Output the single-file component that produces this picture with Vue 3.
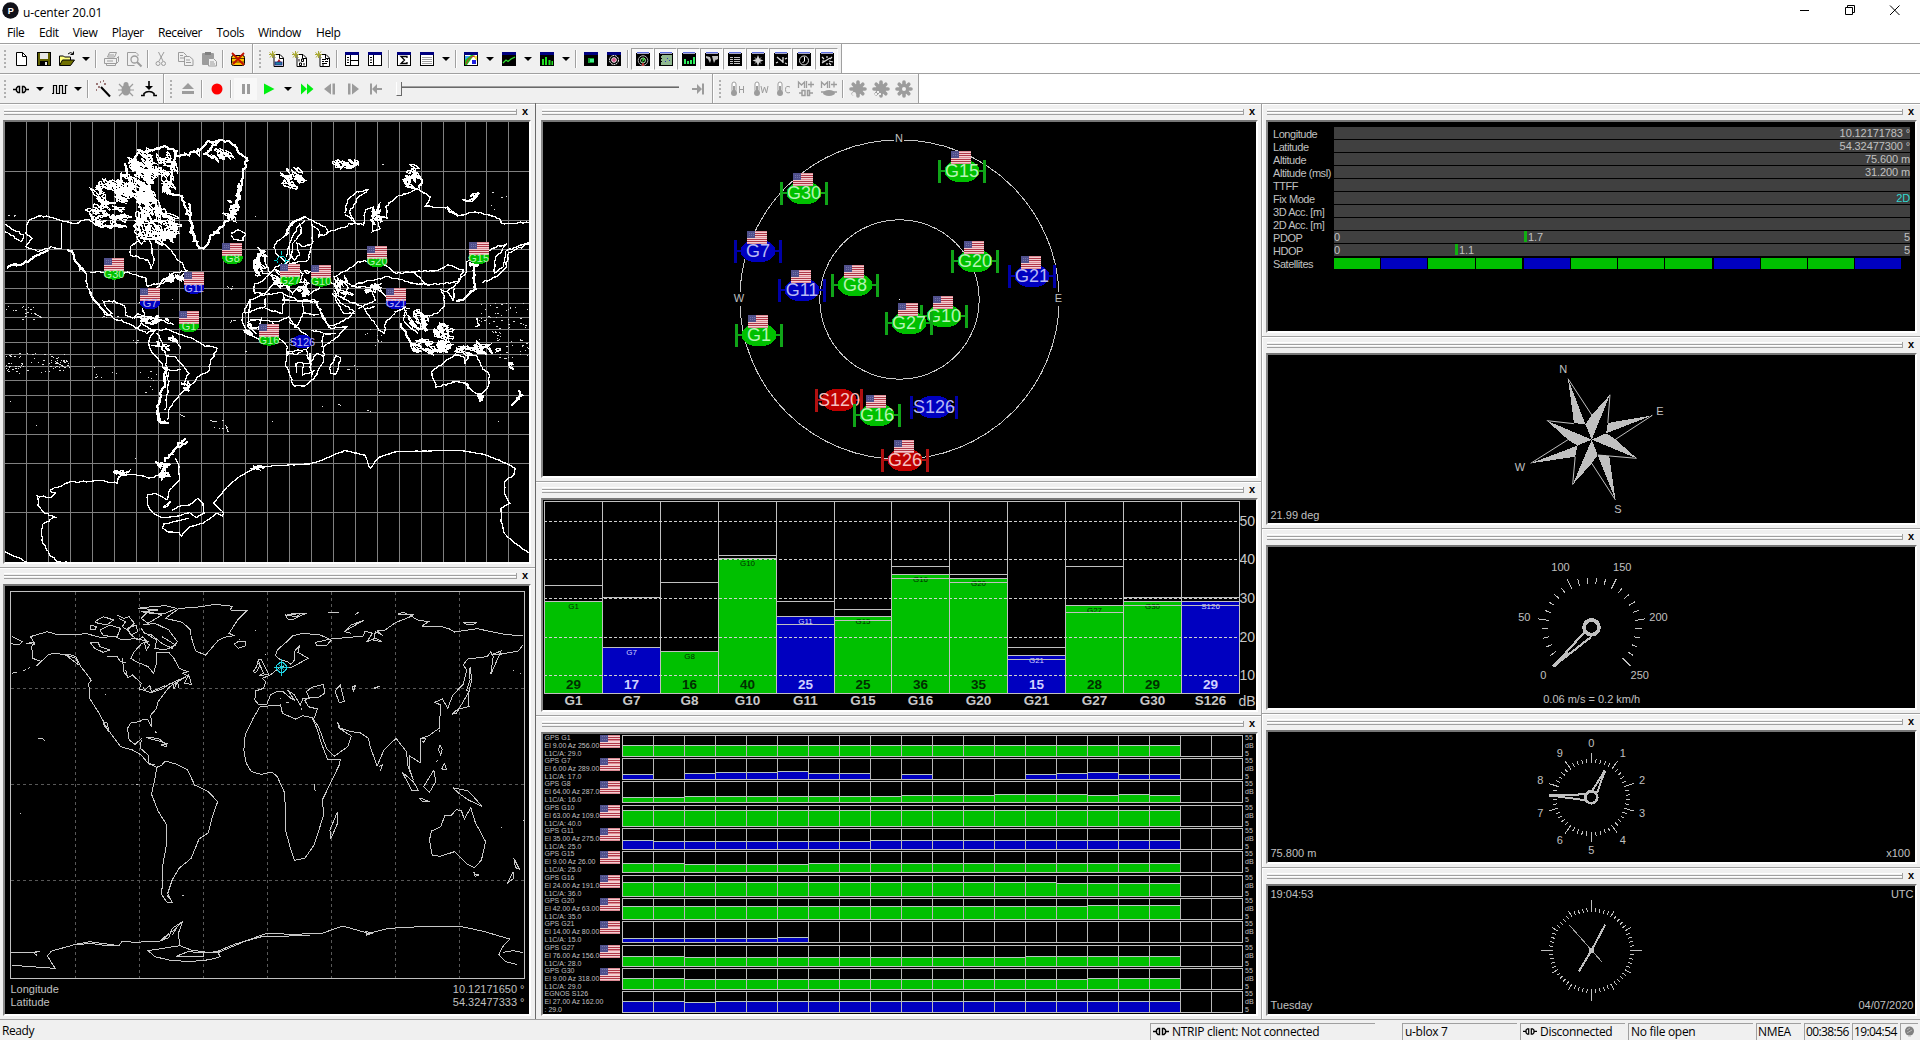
<script setup>
const menu = [
  ['File', 32], ['Edit', 33.7], ['View', 39], ['Player', 46.3], ['Receiver', 58.4],
  ['Tools', 41.6], ['Window', 58], ['Help', 30]
]

/* ---------- toolbar icons, 16 x 16 each ---------- */
const G = '#9c9c9c'
const page = '<path d="M5 3.5h6l3.500 3.500v8.500h-9.500z" fill="#fff" stroke="#000"/><path d="M10.500 3.500v4h4" fill="none" stroke="#000"/><path d="M0.500 1.500l6 5M6 0.500l-5 6M3.500 0v7M0 3.500h7" stroke="#a8a830" stroke-width="1"/>'
const win = (inner, bg = '#fff') => `<rect x="1.5" y="2.500" width="13" height="12" fill="${bg}" stroke="#000"/><rect x="1" y="1" width="14" height="3" fill="#000080"/>${inner}`
const dwin = (inner) => `<rect x="1" y="2" width="14" height="13" fill="#000"/><rect x="2" y="1" width="12" height="1" fill="#5b6ee0"/><rect x="2" y="2" width="12" height="1" fill="#a8a8c8"/>${inner}`
const thermo = (c) => `<rect x="3" y="1" width="4" height="10" rx="2" fill="#fff" stroke="${G}"/><circle cx="5" cy="12" r="3" fill="${G}"/><rect x="4" y="5" width="2" height="7" fill="${G}"/>${c}`
const gear = `<circle cx="8" cy="8" r="5" fill="${G}"/><path d="M8 1v14M1 8h14M3.200 3.200l9.600 9.600M12.800 3.200l-9.600 9.600" stroke="${G}" stroke-width="3.600" stroke-linecap="round"/>`
const mplus = `<path d="M0.500 7v-6l3 3 3-3v6M8.500 0v7M10 3.500h6M13 0.500v6" fill="none" stroke="${G}" stroke-width="1.300"/>`
const icons = {
  neu: '<path d="M3.500 1.500h6l4 4v9h-10z" fill="#fff" stroke="#000"/><path d="M9.500 1.500v4h4" fill="none" stroke="#000"/>',
  save: '<rect x="1.500" y="1.500" width="13" height="13" fill="#606000" stroke="#000"/><rect x="4" y="2" width="8" height="6" fill="#e8e8e8"/><rect x="4" y="10" width="8" height="5" fill="#000"/><rect x="9" y="11" width="2" height="3" fill="#e8e8e8"/>',
  open: '<path d="M0.500 14v-9h4l1 1h6v3" fill="#ffff80" stroke="#000"/><path d="M0.500 14.500l3-5.500h12l-4 5.500z" fill="#707000" stroke="#000"/><path d="M9 3q2-2.500 5-0.500M14.500 0.500v3h-3" fill="none" stroke="#000"/>',
  print: `<path d="M4.500 6l2-4.500h7l-2 4.500zM1.500 7.500h12v5h-12zM13.500 7.500l2-2v5l-2 2M3.500 12.500v2h9v-2M6 4h5M4 10h6" fill="none" stroke="${G}"/>`,
  preview: `<path d="M12 5v-1.500l-2-2h-8.500v13h7" fill="none" stroke="${G}"/><circle cx="8.500" cy="8.500" r="3.500" fill="none" stroke="${G}" stroke-width="1.300"/><path d="M11 11l4.500 4.500" stroke="${G}" stroke-width="2"/>`,
  cut: `<path d="M3.500 1l4.500 9M9 1l-5 9" stroke="${G}" fill="none"/><circle cx="3" cy="12.500" r="2" fill="none" stroke="${G}"/><circle cx="8.500" cy="12.500" r="2" fill="none" stroke="${G}"/>`,
  copy: `<path d="M0.500 1.500h5l3 3v6h-8zM2 4.500h3M2 7h5" fill="#f0f0f0" stroke="${G}"/><path d="M6.500 5.500h5l3.500 3v6h-8.500zM8 9h4M8 11.500h5" fill="#f0f0f0" stroke="${G}"/>`,
  paste: `<rect x="1" y="2" width="12" height="12" rx="1" fill="${G}"/><rect x="4" y="1" width="6" height="3" fill="#808080"/><path d="M7.500 7.500h5l3 3v4.500h-8zM9 11h4M9 13h5" fill="#f0f0f0" stroke="${G}"/>`,
  purge: '<rect x="1.500" y="4.500" width="13" height="10" rx="2" fill="#ffc000" stroke="#000"/><path d="M2 7.500h12M2 11h12" stroke="#604000"/><path d="M2 2l12 12M14 2l-11 11" stroke="#c01000" stroke-width="1.800"/>',
  lgo: page + '<path d="M8 11l2-3 2 3z" fill="#c02020"/><rect x="6" y="11" width="7" height="3" fill="#2080a0" stroke="#202080" stroke-width=".8"/>',
  bin: page + '<path d="M7 8v2.500M9.500 8v2.500h2v-2.500zM7.500 12v2.500h2v-2.500zM12 12v2.500" fill="none" stroke="#000"/>',
  log: page + '<path d="M7 8.500h4M12 8.500h1M7 10.500h2M10 10.500h3M7 12.500h5M7 14h2" stroke="#000"/>',
  split1: win('<path d="M6.500 4v10M6.500 9.500h8M3 6.500h2M3 9h2M3 11.500h2" stroke="#000"/>'),
  split2: win('<path d="M6.500 4v10M3 6.500h2M3 9h2M3 11.500h2" stroke="#000"/>'),
  sum: win('<path d="M11 7v-1.500h-6l3.500 3.500-3.500 3.500h6v-1.500" fill="none" stroke="#000" stroke-width="1.300"/>'),
  table: win('<path d="M3 6.500h10M3 8.500h10M3 10.500h10M3 12.500h10" stroke="#a0a0a0"/>'),
  chart: win('<path d="M2 5h7l-7 7z" fill="#40a0ff"/><path d="M2 14v-5l6-5h3l-7 10z" fill="#20c020"/><path d="M10 5h4v5z" fill="#f0e040"/><rect x="9" y="9" width="4" height="4" fill="#2020e0"/><path d="M3 13q2-7 9-8" fill="none" stroke="#e02020"/>'),
  line: win('<path d="M2 12l3-3 2 1.500 3-2.500 4-2" fill="none" stroke="#30e030" stroke-width="1.300"/>', '#000'),
  bars: win('<path d="M3 14v-6h2v6M6 14v-8h2v8M9.500 14v-5h2v5M12.500 14v-4h1.500v4" fill="#20e020"/>', '#000'),
  dev: win('<rect x="5" y="7" width="6" height="5" fill="#10a030"/><rect x="7" y="8" width="4" height="3" fill="#40f090"/>', '#000'),
  sky2: win('<circle cx="8" cy="9" r="4.500" fill="none" stroke="#fff" stroke-dasharray="2 .7"/><circle cx="8" cy="9" r="2.300" fill="#c02060" stroke="#fff"/><rect x="7.500" y="8.500" width="1" height="1" fill="#fff"/>', '#000'),
  d1: dwin('<circle cx="8" cy="9.500" r="4.800" fill="none" stroke="#b0b0b0"/><circle cx="8" cy="9.500" r="2.500" fill="none" stroke="#b0e0b0"/><path d="M8 6l2 3-3 2z" fill="#30d030"/><path d="M8 12v3" stroke="#e03030" stroke-width="1.500"/>'),
  d2: dwin('<rect x="3" y="4" width="11" height="10" fill="#90b890"/><path d="M3 4h1v1h-1zM3 7h1v1h-1zM3 10h1v1h-1z" fill="#000"/><path d="M9 7h1v1h-1zM7 10h1v1h-1zM11 9h1v1h-1z" fill="#3030c0"/>'),
  d3: dwin('<path d="M3 13v-5h2v5M6 13v-3h2v3M9 13v-4h2v4M12 13v-7h2v7" fill="#30f060"/>'),
  d4: dwin('<path d="M2 5l4 1 1 3-1 3-2-4-2-1zM8 5l3 0 1 3-2 4-1-3zM11 5h3v3l-2 1z" fill="#c0c0c0"/>'),
  d5: dwin('<path d="M3 6.500h3M3 8.500h3M3 10.500h3M3 12.500h3M7 6.500h6M7 8.500h6M7 10.500h6M7 12.500h6" stroke="#c0c0c0"/>'),
  d6: dwin('<path d="M8 4l1.500 4 4 1.500-4 1.500-1.500 4-1.500-4-4-1.500 4-1.500z" fill="#d8d8d8"/><path d="M5 6.500l6 6M11 6.500l-6 6" stroke="#d0d0d0"/>'),
  d7: dwin('<path d="M4 6l6 5M10 6v6M3 12l2-1M12 8l2-1M12 12l2 1" stroke="#e0e0e0" stroke-width="1.300"/>'),
  d8: dwin('<circle cx="8" cy="9.500" r="4.500" fill="none" stroke="#e0e0e0"/><path d="M8.500 6v4l-2 2" fill="none" stroke="#fff"/>'),
  d9: dwin('<path d="M3 12l8-5M3 6l2 2M8 5v2M13 6l-2 2M3 10h3M10 10l4 1M8 12v2M12 14l-2-2" stroke="#e0e0e0" stroke-width="1.200"/>'),
  plug: '<path d="M0 8.500h3M6.500 5.500h-1.500l-1.500 1.500v3l1.500 1.500h1.500zM13 8.500h3M9.500 5.500h1.500l1.500 1.500v3l-1.500 1.500h-1.500z" fill="none" stroke="#000" stroke-width="1.400"/>',
  wave: '<path d="M1 12.500h1.500v-8h3v8h3v-8h3v8h3v-8h2" fill="none" stroke="#000" stroke-width="1.200"/>',
  wand: '<path d="M6 6l9 9.500" stroke="#000" stroke-width="2"/><path d="M1 3h2M5 1h1M9 3h2M3 6h2M1 9h1M8 0h1" stroke="#805050" stroke-width="1.500"/>',
  bug: `<ellipse cx="8" cy="9" rx="4.500" ry="5.500" fill="${G}"/><circle cx="8" cy="3.500" r="2.500" fill="${G}"/><path d="M1 3l4 4M15 3l-4 4M0 9h16M1 15l4-4M15 15l-4-4" stroke="${G}" stroke-width="1.200"/>`,
  inst: '<path d="M8 0v6" stroke="#000" stroke-width="1.600"/><path d="M4 5h8l-4 4z" fill="#000"/><path d="M0 14.500h3v-2q2-2 5-2t5 2v2h3" fill="none" stroke="#000" stroke-width="1.600"/>',
  eject: `<path d="M8 2l6 6h-12zM2 10h12v3h-12z" fill="${G}"/>`,
  rec: '<circle cx="8" cy="8" r="5.500" fill="#f00"/>',
  pause: `<path d="M4 3h3v10h-3zM9 3h3v10h-3z" fill="${G}"/>`,
  play: '<path d="M3 2.500l10.500 5.500-10.500 5.500z" fill="#00f010"/>',
  ff: '<path d="M2 2.500l6 5.500-6 5.500zM8 2.500l6.500 5.500-6.500 5.500z" fill="#00f010"/>',
  back: `<path d="M9 2.500v11l-7-5.500zM10.500 2.500h2.500v11h-2.500z" fill="${G}"/>`,
  fwd: `<path d="M7 2.500v11l7-5.500zM3 2.500h2.500v11h-2.500z" fill="${G}"/>`,
  home: `<path d="M2 2.500h2v11h-2zM14 7h-5v-4l-5 5 5 5v-4h5z" fill="${G}"/>`,
  end: `<path d="M12 2.500h2v11h-2zM2 7h5v-4l5 5-5 5v-4h-5z" fill="${G}"/>`,
  th: thermo(`<path d="M10.500 5v7M14.500 5v7M10.500 8.500h4" stroke="${G}"/>`),
  tw: thermo(`<path d="M9 5l1.500 7 2-6 2 6 1.500-7" fill="none" stroke="${G}"/>`),
  tc: thermo(`<path d="M15 6q-4.500-2-4.500 2.500t4.500 3" fill="none" stroke="${G}"/>`),
  m1: mplus + `<path d="M1 12h3M12 12h3M7 9.500h-3v5h3zM9.500 9.500h2v5h-2z" fill="none" stroke="${G}" stroke-width="1.500"/>`,
  m2: mplus + `<ellipse cx="8" cy="12" rx="6" ry="3" fill="${G}"/><path d="M0 11h16" stroke="${G}" stroke-width="1.500"/>`,
  g1: gear + '<circle cx="4" cy="13" r="2" fill="#f0f0f0"/>',
  g2: gear + '<path d="M0 10h2v2h-2zM4 10h2v2h-2zM2 12h2v2h-2zM6 12h2v2h-2zM0 14h2v2h-2zM4 14h2v2h-2z" fill="#f0f0f0"/>',
  g3: gear + '<circle cx="8" cy="8" r="2" fill="#f0f0f0"/>'
}
const row1 = [
  ['neu', 'save', 'open', 'v', '|', 'print', 'preview', '|', 'cut', 'copy', 'paste', '|', 'purge'],
  ['lgo', 'bin', 'log', '|', 'split1', 'split2', '|', 'sum', 'table', 'v', '|', 'chart', 'v', 'line', 'v', 'bars', 'v', '|', 'dev', 'sky2', '|', 'd1', 'd2', 'd3', 'd4', 'd5', 'd6', 'd7', 'd8', 'd9']
]
const row2 = [
  ['plug', 'v', 'wave', 'v', '|', 'wand', 'bug', 'inst'],
  ['eject', '|', 'rec', '|', 'pause', 'play', 'v', 'ff', 'back', 'fwd', 'home', 'slider', 'end'],
  ['th', 'tw', 'tc', 'm1', 'm2', '|', 'g1', 'g2', 'g3']
]
const pressed = (n) => /^d\d$/.test(n)

/* ---------- colours ---------- */
const COL = { g: '#00c000', b: '#0000c0', r: '#c00000' }
const BAR = { g: '#10a418', b: '#0000a8', r: '#b01010' }

/* ---------- sky view ---------- */
const sky = [
  ['G15', 787, 182, 'g', 1], ['G30', 311, 248, 'g', 1], ['G7', 175, 422, 'b', 1], ['G11', 307, 541, 'b', 1],
  ['G8', 466, 526, 'g', 1], ['G20', 826, 452, 'g', 1], ['G21', 997, 499, 'b', 1], ['G10', 733, 617, 'g', 1],
  ['G27', 628, 638, 'g', 1], ['G1', 178, 674, 'g', 1], ['S120', 418, 871, 'r', 0], ['G16', 532, 914, 'g', 1],
  ['S126', 703, 890, 'b', 0], ['G26', 616, 1049, 'r', 1]
].map(([n, x, y, c, f]) => ({ n, x: Math.round(700 + x / 3), y: Math.round(110 + y / 3), c, f }))

/* ---------- signal level bars ---------- */
const levels = [
  ['G1', 29, 'g', 364, [316]], ['G7', 17, 'b', 502, [352]], ['G8', 16, 'g', 514, [307]],
  ['G10', 40, 'g', 235, [226]], ['G11', 25, 'b', 409, [364, 433]], ['G15', 25, 'g', 409, [388, 421]],
  ['G16', 36, 'g', 283, [259, 295]], ['G20', 35, 'g', 295, [283, 307]], ['G21', 15, 'b', 526, [502, 538]],
  ['G27', 28, 'g', 376, [259, 397]], ['G30', 29, 'g', 364, [352, 376]], ['S126', 29, 'b', 364, [352, 376]]
].map(([n, v, c, top, marks], i) => ({
  n, v, c, x: 544.5 + Math.round(i * 57.9), w: Math.round((i + 1) * 57.9) - Math.round(i * 57.9),
  y: Math.round(480 + top / 3) + 0.5, marks: marks.map(m => Math.round(480 + m / 3) + 0.5)
}))
const dbLines = [[50, 521.5], [40, 559.5], [30, 598.5], [20, 637.5], [10, 675.5]]

/* ---------- signal history ---------- */
const rep = (v, n) => Array(n).fill(v)
const history = [
  ['GPS G1', 'El 9.00 Az 256.00', 'L1C/A: 29.0', 'g', rep(10, 18)],
  ['GPS G7', 'El 6.00 Az 289.00', 'L1C/A: 17.0', 'b', [16, 0, 15, 14, 14, 13, 15, 15, 0, 16, 0, 0, 0, 16, 15, 14, 16, 16]],
  ['GPS G8', 'El 64.00 Az 287.00', 'L1C/A: 16.0', 'g', [16, 16, ...rep(15, 7), 14, 14, 14, 13, 13, 13, 14, 13, 14]],
  ['GPS G10', 'El 63.00 Az 109.00', 'L1C/A: 40.0', 'g', rep(5, 18)],
  ['GPS G11', 'El 35.00 Az 275.00', 'L1C/A: 25.0', 'b', [12, ...rep(13, 7), ...rep(12, 10)]],
  ['GPS G15', 'El 9.00 Az 26.00', 'L1C/A: 25.0', 'g', [12, 12, 13, 13, 13, 13, ...rep(12, 12)]],
  ['GPS G16', 'El 24.00 Az 191.00', 'L1C/A: 36.0', 'g', [...rep(7, 14), 8, 8, 8, 8]],
  ['GPS G20', 'El 42.00 Az 63.00', 'L1C/A: 35.0', 'g', [...rep(8, 15), 7, 7, 7]],
  ['GPS G21', 'El 14.00 Az 80.00', 'L1C/A: 15.0', 'b', [17, 17, 17, 17, 17, 16]],
  ['GPS G27', 'El 76.00 Az 156.00', 'L1C/A: 28.0', 'g', [11, 11, ...rep(12, 11), ...rep(11, 5)]],
  ['GPS G30', 'El 9.00 Az 318.00', 'L1C/A: 29.0', 'g', [10, 10, ...rep(11, 13), 10, 10, 10]],
  ['EGNOS S126', 'El 27.00 Az 162.00', ': 29.0', 'b', [10, 10, 11, ...rep(10, 15)]]
].map(([a, b, d, c, v], i) => ({ a, b, d, c, v, y: [735, 758, 781, 805, 828, 851, 875, 898, 921, 945, 968, 991][i] + 0.5, flag: i < 11 }))

/* ---------- status table ---------- */
const table = [
  ['Longitude', '10.12171783 °'], ['Latitude', '54.32477300 °'], ['Altitude', '75.600 m'],
  ['Altitude (msl)', '31.200 m'], ['TTFF', ''], ['Fix Mode', '2D'], ['3D Acc. [m]', ''], ['2D Acc. [m]', ''],
  ['PDOP', '5', 190, '1.7'], ['HDOP', '5', 121, '1.1']
]
const strip = 'gbggbgggbggb'.split('')

/* ---------- dials ---------- */
const tick = (cx, cy, deg, r1, r2) => {
  const a = deg * Math.PI / 180, s = Math.sin(a), c = -Math.cos(a)
  return `M${(cx + s * r1).toFixed(2)} ${(cy + c * r1).toFixed(2)}L${(cx + s * r2).toFixed(2)} ${(cy + c * r2).toFixed(2)}`
}
let speedTicks = '', altTicks = '', clockTicks = ''
for (let i = 0; i <= 25; i++) speedTicks += tick(1591.7, 627.3, -135 + i * 10.8, 43.5, i % 5 ? 50 : 54.5)
for (let i = 0; i < 50; i++) altTicks += tick(1591.3, 797.3, i * 7.2, 34.5, i % 5 ? 38.8 : 44.5)
for (let i = 0; i < 60; i++) clockTicks += tick(1591.3, 950.3, i * 6, 38.5, i % 15 ? (i % 5 ? 42.5 : 45.5) : 50.5)
const altLabels = Array.from({ length: 10 }, (_, i) => [i, 1591.3 + 53.5 * Math.sin(i * Math.PI / 5), 801 - 53.5 * Math.cos(i * Math.PI / 5)])

/* ---------- maps ---------- */
let seed = 7
const rnd = () => (seed = (seed * 16807) % 2147483647) / 2147483647
const P = (s) => s.trim().split(/\s+/).map(p => p.split(',').map(Number))
function rough (s, amp = 4) {
  const pts = P(s)
  let d = `M${pts[0]}`
  for (let i = 1; i < pts.length; i++) {
    const [x0, y0] = pts[i - 1], [x1, y1] = pts[i]
    const n = Math.max(1, Math.round(Math.hypot(x1 - x0, y1 - y0) / 8))
    for (let k = 1; k <= n; k++) {
      const j = k === n ? 0.3 : 1
      d += `L${(x0 + (x1 - x0) * k / n + (rnd() - 0.5) * amp * j * 2).toFixed(1)},${(y0 + (y1 - y0) * k / n + (rnd() - 0.5) * amp * j * 2).toFixed(1)}`
    }
  }
  return d
}
/* jagged, elongated island outlines scattered over an oval region */
function islets (x, y, w, h, n, size, tilt = 0.8) {
  let d = ''
  for (let i = 0; i < n; i++) {
    const a0 = rnd() * 6.28, r = Math.sqrt(rnd())
    const cx = x + w / 2 + Math.cos(a0) * r * w / 2, cy = y + h / 2 + Math.sin(a0) * r * h / 2
    const t = tilt + (rnd() - 0.5) * 1.6, long = size * (0.7 + rnd() * 1.3), thin = size * (0.25 + rnd() * 0.5)
    const m = 9
    for (let k = 0; k < m; k++) {
      const a = k * 6.28 / m, q = 0.35 + rnd() * 0.9
      const u = Math.cos(a) * long * q, v = Math.sin(a) * thin * q
      d += `${k ? 'L' : 'M'}${(cx + u * Math.cos(t) - v * Math.sin(t)).toFixed(1)},${(cy + u * Math.sin(t) + v * Math.cos(t)).toFixed(1)}`
    }
    d += 'Z'
  }
  return d
}
function specks (x, y, w, h, n) {
  let d = ''
  for (let i = 0; i < n; i++) d += `M${(x + rnd() * w).toFixed(0)},${(y + rnd() * h).toFixed(0)}h${(2 + rnd() * 3).toFixed(0)}`
  return d
}
const mapThin = [
  '78,375 90,357 112,348 150,352 190,365 215,372 250,358 275,370 310,378 370,382',
  '78,375 75,400 92,415 75,440 110,455 150,440 180,445', '15,372 40,390 70,405 60,425 25,400 15,395',
  '250,520 252,560 270,600 300,630 330,655 365,668 400,685 425,700 452,688',
  '262,575 275,600 290,622 310,645 325,640 305,618 300,603 332,603 362,618 364,645 385,655 400,642 420,650 415,625',
  '405,610 440,580 465,552 500,535', '262,517 370,517 400,527 425,535 428,558 470,545 500,522 545,512',
  '405,420 378,440 380,465 430,480 438,505 447,480 440,440 435,415',
  '450,425 480,435 500,455 515,480 530,490 540,515 525,530 480,545', '390,655 415,648 450,655 480,665 505,675',
  '400,685 410,670 440,690 490,688 520,703 560,715 590,735 630,745 610,790 605,815 575,830 550,860 535,870 510,900 490,930 485,960',
  '450,688 437,710 433,735 440,755 465,785 482,815 478,850', '440,735 470,740 480,765 510,770 530,795 548,820 535,850 550,862',
  '482,765 485,810 500,812 525,810', '490,815 487,870 480,930', '455,700 480,740', '500,705 525,745',
  '670,400 690,390 715,402 705,420 680,418 672,404', '742,505 758,450 748,440 765,460 775,500 782,520 762,520 752,490 742,505',
  '735,500 740,480 752,480 748,508 735,505',
  '800,458 797,435 830,400 845,370 885,350 905,360 945,380 950,400 925,410 928,395 905,372',
  '905,362 907,430 880,440 862,430 870,465 855,480 845,470 830,490 812,470 800,458', '870,370 875,400 850,430 848,470',
  '845,470 840,430 862,385 885,360', '830,470 838,440',
  '905,430 895,480 870,485 840,492 800,500 790,515 760,545 740,550 738,580 770,580 790,555 820,545 850,580 870,560 895,585 930,560 960,548 990,565 970,530 1010,510 1040,485 1090,480 1125,500 1150,520 1200,515 1240,555 1200,550 1130,530 1060,545 1020,560',
  '990,545 975,560 985,590 1000,595 1010,565 1000,545 1030,560 1080,562 1110,550', '860,500 880,520 870,545 900,550', '800,510 830,530 820,560',
  '1240,555 1330,545 1345,510 1300,495 1275,510 1200,515',
  '950,398 985,385 1030,368 1055,375 1060,330 1085,322 1080,395 1103,385 1095,345 1125,355 1120,320 1150,292 1215,268 1250,290 1235,320 1300,322 1330,348 1380,335 1450,355 1455,370 1535,368',
  '1535,425 1500,440 1470,452 1462,500 1435,520 1440,470 1472,432 1430,445 1390,465 1355,485 1352,520 1320,560 1298,575 1280,570 1290,590 1292,615 1270,640 1228,650 1240,672 1225,690 1215,660',
  '1535,432 1478,458 1468,505 1440,530 1400,548', '1300,575 1315,600 1320,565', '1090,620 1060,628 1045,615 1015,605 985,590 970,580', '1060,630 1080,660 1100,690 1115,700 1120,670 1150,635 1172,625 1187,650 1200,690 1215,700',
  '1075,560 1090,600 1040,625', '1100,570 1160,620 1190,625', '965,580 1000,640 1030,640', '1180,630 1170,660 1195,690',
  '752,588 725,600 705,640 705,670 720,700 755,722 810,715 835,740 828,790 840,820 855,858 885,857 915,830 940,780 940,740 970,720 1007,680 960,685 935,650 915,600 870,602 835,588 820,577 752,588',
  '915,600 940,650 955,682 1010,655 1028,635 985,605 970,570', '770,595 770,620 710,640', '820,580 825,600 818,640 770,625', '820,600 880,605 880,640 860,680 835,650', '880,605 925,605', '880,640 925,645',
  '725,600 720,680 745,700', '760,650 750,690', '840,665 870,690 905,720 890,750 830,755', '905,690 940,700 935,740', '890,750 900,790 860,790 860,820', '900,790 920,760 940,770', '880,790 880,825 915,810', '940,700 975,700',
  '830,760 860,765 880,750', '900,760 905,830', '725,660 810,665 840,650', '790,665 795,715',
  '958,800 975,768 990,775 975,822 960,820 958,800',
  '1255,815 1300,778 1320,765 1345,770 1350,790 1365,765 1385,770 1400,800 1422,830 1415,865 1398,882 1375,875 1350,850 1325,845 1265,862 1262,845 1253,815',
  '1225,640 1240,650 1222,660', '1385,655 1392,675 1380,680', '15,1355 45,1370 78,1386',
  '195,1386 165,1384 135,1350 122,1320 122,1275 160,1252 130,1240 110,1215 108,1188 150,1192 160,1180 145,1170 205,1145 290,1142 340,1150 345,1130 375,1122 440,1133 490,1118',
  '1000,340 1010,300 1035,275 1068,270 1035,300 1015,335 1030,365 1002,345'
]
const mapSmooth = [
  '510,1075 520,1100 520,1140 490,1175 485,1200 460,1185 450,1180 428,1185 428,1215 445,1240 470,1253 510,1250 550,1238 570,1253 592,1240 590,1210 575,1195 550,1215 525,1218 500,1230',
  '620,1210 650,1240 645,1248 630,1240 590,1270 550,1280 527,1308 520,1298 490,1296 472,1285 475,1272 520,1262 550,1255',
  '620,1210 660,1160 695,1130 720,1115 760,1100 800,1097 900,1092 935,1080 1000,1052 1060,1065 1075,1105 1100,1072 1150,1055 1250,1053 1340,1052 1400,1062 1450,1080 1497,1105 1492,1125 1465,1145 1465,1180 1480,1210 1455,1225 1455,1265 1465,1300 1490,1325 1535,1358',
  '472,1222 495,1205 485,1220 474,1222'
]
const mapThick = [
  '20,503 70,490 110,465 140,450', '195,448 215,470 232,498 250,520', '480,800 478,850 465,900 457,935 465,960 485,972', '458,930 462,962 490,968',
  '510,165 550,165 575,150 600,130 635,120 668,124 690,152 720,180 705,210 698,260 685,310 665,355 640,382 610,415 590,445 572,435 558,400 548,345 530,290',
  '530,290 495,282 482,262 498,225 505,180 512,155 480,138 440,150 400,160 375,190', '470,545 505,528', '1380,490 1376,545 1380,565 1355,590 1325,602',
  '1165,670 1180,710 1205,735 1240,748 1300,758', '540,1015 515,1040 490,1065 480,1085', '545,1025 520,1045', '640,120 610,150 590,165', '1505,870 1520,885 1495,905 1483,915', '1350,850 1358,865', '1385,885 1400,888 1395,903 1385,885',
  '830,405 848,372 885,352', '1215,265 1225,240 1200,225', '1300,325 1330,348', '695,250 690,330 660,355', '545,310 565,420',
  '425,322 455,328 485,350 512,382 510,405 498,425', '440,165 432,210 438,300 395,305', '400,320 430,345 460,390 490,410', '290,380 365,380', '1290,670 1300,700 1280,715', '750,460 758,500'
]
const roughThin = mapThin.map(s => rough(s, 2.600)).join('') + mapSmooth.map(s => rough(s, 1)).join('')
const roughThick = mapThick.map(s => rough(s, 5)).join('')
const arctic = islets(380, 150, 130, 90, 44, 11) + islets(258, 240, 190, 75, 54, 10) + islets(330, 200, 120, 110, 44, 10) + islets(250, 310, 120, 65, 26, 9, 0.3) +
  islets(390, 320, 120, 110, 34, 14) + islets(400, 270, 50, 40, 12, 9) + islets(455, 370, 55, 60, 12, 11) + islets(820, 205, 70, 60, 18, 9) +
  islets(965, 180, 85, 26, 18, 6, 0) + islets(1165, 190, 55, 75, 14, 8) + islets(1350, 280, 60, 35, 7, 7, 0) + islets(470, 240, 30, 40, 8, 8) + islets(455, 1075, 40, 55, 12, 8) +
  islets(335, 1108, 40, 20, 6, 6, 0) + islets(730, 1098, 35, 12, 6, 4, 0) + islets(570, 140, 100, 40, 12, 8) + islets(655, 300, 35, 60, 8, 7)
const asia = islets(1190, 720, 130, 40, 26, 8, 0.3) + islets(1190, 630, 50, 60, 10, 9) + islets(1210, 660, 30, 40, 6, 7) + islets(1265, 670, 45, 60, 16, 8) + islets(1330, 735, 120, 35, 20, 9, 0.3) + islets(742, 450, 30, 80, 10, 8) +
  islets(795, 500, 110, 65, 22, 9) + islets(860, 560, 35, 25, 10, 6) + islets(380, 645, 110, 25, 12, 6, 0.2) + islets(705, 670, 35, 35, 6, 7) + islets(1060, 555, 50, 25, 8, 7) + islets(460, 710, 60, 40, 5, 6) + islets(480, 525, 60, 20, 10, 6) + islets(970, 530, 60, 60, 8, 8) + islets(1365, 470, 25, 50, 6, 6) + islets(525, 835, 25, 35, 5, 5) + islets(1475, 780, 15, 25, 4, 5) + islets(1070, 320, 40, 70, 8, 8, 1.5)
const dots = specks(15, 615, 110, 50, 16) + specks(15, 760, 200, 60, 50) + specks(140, 780, 60, 30, 20) + specks(1390, 610, 140, 110, 55) + specks(1440, 720, 95, 60, 26) + specks(400, 810, 60, 70, 9) +
  specks(600, 960, 60, 30, 6) + specks(230, 800, 110, 35, 7) + specks(1060, 690, 50, 60, 10) + specks(1000, 780, 50, 30, 5) + specks(640, 560, 40, 20, 6) + specks(665, 660, 15, 12, 5) + specks(15, 790, 30, 20, 10) +
  specks(385, 720, 16, 12, 6) + specks(1410, 270, 60, 60, 6) + specks(290, 650, 60, 10, 4) + specks(515, 942, 18, 10, 5) + specks(20, 345, 25, 6, 5) + specks(980, 912, 15, 6, 3) + specks(1065, 928, 12, 8, 3) + specks(1095, 620, 120, 60, 6) +
  'M720,873h4M935,920h3M1100,878h3M1108,193h6M740,350h3M105,977h3M28,905h4M790,965h3M1445,965h4M392,1077h3M500,600h3M712,754h4M652,800h3M902,210h3M100,640l22,14M160,785l30,18M655,975l8,22M610,962l20,4'
const gridX = Array.from({ length: 24 }, (_, i) => 4.5 + Math.round(i * 21.93))
const gridY = [214, 361, 448, 514, 565, 610, 651, 689, 726, 763, 800, 841, 886, 937, 1003, 1090, 1237].map(v => Math.floor(100 + v / 3) + 0.5)
const pins = [
  ['G8', 675, 473, 'g'], ['G30', 331, 519, 'g'], ['G11', 564, 562, 'b'], ['G7', 436, 608, 'b'], ['G1', 549, 677, 'g'],
  ['G10', 932, 540, 'g'], ['G27', 842, 537, 'g'], ['G20', 1095, 482, 'g'], ['G15', 1390, 472, 'g'], ['G21', 1150, 608, 'b'],
  ['G16', 781, 717, 'g'], ['S126', 878, 725, 'b']
].map(([n, x, y, c]) => ({ n, x: x * 540 / 1568, y: 100 + y / 3, c }))

const world = [
  '1519,212 1470,209 1385,191 1320,201 1300,189 1308,193 1280,184 1225,183 1245,170 1213,165 1195,154 1150,172 1118,195 1095,198 1112,212 1090,200 1085,226 1110,230 1090,220 1065,230 1082,205 1060,198 1055,213 962,222 915,232 920,243 948,242 962,225 930,210 880,205 850,212 835,228 805,255 800,272 815,285 835,290 845,298 855,285 855,260 870,240 865,262 895,280 845,308 815,305 785,330 762,340 772,350 765,370 742,378 740,405 752,420 775,418 785,390 805,379 822,380 845,400 855,405 835,375 855,390 872,420 880,400 898,400 890,380 905,367 940,358 942,385 925,397 900,397 885,405 895,425 922,432 912,460',
  '912,460 880,452 858,462 820,445 815,420 755,425 735,460 712,510 708,555 715,595 730,620 758,628 790,621 805,635 825,680 830,740 828,790 843,850 855,886 885,880 912,840 940,750 936,705 985,600 988,584 952,585 935,540 920,490 907,460 925,485 948,550 970,574 1010,545 1020,513 985,490 980,470 988,490 1020,500 1045,503 1070,520 1075,545 1095,603 1115,555 1150,520 1180,560 1185,605 1200,645 1190,615 1188,572 1220,593 1222,520 1245,512 1275,490 1280,420 1262,412 1285,402 1300,430 1315,390 1345,358 1355,315 1345,300 1358,282 1415,275 1425,260 1432,275 1425,328 1455,258 1430,268 1440,270 1505,258 1518,240',
  '1365,307 1370,345 1360,385 1362,425 1330,432 1312,448 1325,445 1362,380 1355,375 1365,345 1362,310', '975,375 988,360 1000,410 985,412 975,385 975,375', '1023,365 1033,362 1026,378 1023,365', '1085,370 1105,362 1088,370',
  '912,658 915,678', '960,823 958,795 980,740 980,775 960,823', '1100,605 1110,600 1104,618', '1168,622 1200,650 1215,676 1195,676 1180,645 1168,622', '1230,665 1260,615 1265,650 1247,682 1230,665', '1218,698 1247,710 1225,708 1218,698', '1315,668 1360,678 1400,724 1360,705 1330,683 1315,668',
  '1278,540 1284,552 1280,570 1273,555 1278,540', '1290,595 1297,615 1283,612 1290,595', '1225,520 1237,520 1230,532 1225,530',
  '1253,798 1280,785 1292,750 1310,752 1325,733 1340,738 1348,762 1367,728 1380,772 1410,830 1398,885 1378,908 1357,898 1320,860 1278,874 1255,870 1247,825 1253,798', '1375,920 1380,930 1390,930 1380,934 1375,920', '1492,880 1508,912 1497,908 1492,880', '1490,920 1492,940 1473,955 1490,920',
  '735,320 745,305 748,292 755,300 745,320 738,324', '750,285 760,285 770,308 780,328 752,332 765,325 755,300 750,285', '680,238 690,231 712,230 712,243 692,250 680,238',
  '830,155 850,145 890,145 865,155 850,165 835,162 830,150 860,155 875,145 835,150', '952,142 985,142', '1030,150 1043,140', '1000,200 1020,180 1058,165 1015,190 1000,200 1020,205', '1155,147 1200,148 1180,160 1195,152 1170,142 1155,147', '1345,172 1385,172 1370,180 1348,176',
  '480,160 520,130 570,127 625,118 675,124 668,135 718,136 690,165 665,205 680,212 650,217 632,228 597,270 568,258 555,215 553,195 530,172 480,160',
  '36,215 65,230 55,240 32,236', '36,325 48,321', '68,318 75,314', '82,310 88,306', '75,235 100,238 95,225 88,215 137,200 160,207 230,210 245,204 290,217 335,215 355,225 380,222 400,222 430,230 412,235 390,260 380,280 395,290 430,305 446,325 453,300 453,262 490,262 505,280 520,310 545,320 530,325 550,335 556,358 535,355 548,328',
  '75,235 100,232 92,245 95,280 120,290 105,303 140,270 155,265 205,270 220,275 235,305 265,345 258,355 260,400 285,440 305,480 325,510 350,545 385,555 410,570 430,595 455,607 470,600 480,588 510,597 545,615 565,660 605,680 632,710 615,760 605,803 578,822 555,880 520,910 500,945 487,985 500,1012 485,1012 470,990 472,905 483,840 483,778 460,740 440,688 450,640 455,607',
  '190,270 210,285 228,300 220,280 190,270', '300,470 312,475 316,500 300,478 300,465', '410,525 408,550 430,570 432,595 450,600', '355,280 360,320 372,338 385,330 410,355 405,372 440,383 475,370 490,358 540,335 500,360 490,368 458,412 455,430 438,450 440,485 430,465 415,464 405,470 380,474 370,490 375,525 392,538 412,520',
  '415,365 420,375 435,362 440,380 480,362', '500,350 505,372 515,350 520,370', '425,517 460,520 482,537 470,530 430,520', '468,540 485,536 482,545 468,540', '450,500 455,503',
  '262,180 280,185 275,195 262,192 262,180', '275,170 300,155 330,165 310,180 285,175 275,170', '290,195 320,180 350,190 340,215 300,212 290,195', '262,232 285,232 290,245 320,255 300,262 275,250 262,232', '310,275 340,275 350,290 365,292', '340,150 360,160 375,155 390,175 370,195 355,185 365,170 345,160', '370,190 395,180 400,200 380,210 370,190',
  '400,130 440,125 480,122 512,130 480,145 440,145 410,140 460,135 405,130', '410,160 430,140 470,150 430,175 410,160', '415,180 450,175 490,195 515,230 500,250 470,235 440,210 420,205 410,190', '430,210 455,225 450,250 480,255 510,240 470,215', '420,230 435,240 425,255 420,235', '375,205 400,225 415,215 430,235', '365,315 370,335 362,325',
  '110,520 125,522', '125,523 130,528', '485,990 495,1005',
  '31,1162 95,1163 115,1158 100,1165 108,1172', '36,1201 160,1210 137,1172 150,1158 220,1138 260,1130 345,1142 355,1128 390,1132 465,1128 490,1118 500,1090 530,1070 518,1105 522,1142 555,1155 600,1162 640,1160 720,1125 775,1105 850,1108 935,1105 995,1083 1070,1105 1130,1090 1240,1084 1335,1084 1400,1098 1480,1122 1462,1142 1448,1168 1468,1190 1500,1198',
  '220,1140 260,1135 320,1143 345,1142', '465,1128 490,1105 480,1120 462,1130', '500,1110 515,1085 530,1070 500,1100', '522,1142 430,1157 450,1175 490,1185 550,1190 610,1184 640,1175 630,1160 680,1138 760,1115 800,1115 900,1110', '512,1174 545,1160 590,1163 592,1174 512,1174', '590,1163 640,1163', '1060,1098 1080,1105 1065,1110 1060,1098', '1460,1162 1490,1157 1518,1163',
  '740,198 742,198', '770,270 772,268', '396,658 400,658', '58,745 61,745', '1456,787 1459,787', '528,991 533,991', '306,388 309,388', '1490,316 1493,316', '1518,770 1522,764', '1275,500 1278,495', '1266,592 1270,586', '695,225 697,223', '812,398 815,400', '830,412 840,413', '876,430 876,434', '1510,324 1513,326'
]
</script>

<template>
  <div class="app">
    <svg class="defs" width="0" height="0" aria-hidden="true">
      <symbol id="flag" viewBox="0 0 20 13">
        <rect width="20" height="13" fill="#f4cdd0" />
        <path d="M8 2.500h12M8 4.500h12M0 8.500h20M0 10.500h20" stroke="#b03848" stroke-width="1" />
        <path d="M8 0.500h12M8 6.200h12M0 12.500h20" stroke="#dc8a94" stroke-width="1" />
        <rect width="8" height="7" fill="#50508c" />
        <path d="M1.500 2h5M1.500 4.500h5" stroke="#7474a8" stroke-width="1" stroke-dasharray="1 1" />
      </symbol>
    </svg>

    <header class="title">
      <svg width="17" height="17" viewBox="0 0 17 17"><circle cx="8.500" cy="8.500" r="8.200" fill="#101018" /><text x="8.600" y="12" text-anchor="middle" class="logo">P</text></svg>
      <span>u-center 20.01</span>
      <div class="winbtns">
        <svg viewBox="0 0 12 12"><path d="M1 6.500h9" /></svg>
        <svg viewBox="0 0 12 12"><path d="M1.500 3.500h7v7h-7zM3.500 3.500v-2h7v7h-2" /></svg>
        <svg viewBox="0 0 12 12"><path d="M1 1.500l9.500 9.500M10.500 1.500l-9.500 9.500" /></svg>
      </div>
    </header>
    <nav class="menu"><span v-for="m in menu" :key="m[0]" :style="{ width: m[1] + 'px' }">{{ m[0] }}</span></nav>

    <div v-for="(row, ri) in [row1, row2]" :key="ri" class="toolrow">
      <div v-for="(bar, bi) in row" :key="bi" class="toolbar">
        <i class="grip"></i>
        <template v-for="(n, i) in bar" :key="i">
          <i v-if="n === '|'" class="sep"></i>
          <i v-else-if="n === 'v'" class="drop"></i>
          <div v-else-if="n === 'slider'" class="slider"><i></i><b></b></div>
          <div v-else class="btn" :class="{ pressed: pressed(n), held: n === 'pause' }"><svg width="16" height="16" viewBox="0 0 16 16" v-html="icons[n]"></svg></div>
        </template>
      </div>
    </div>

    <main class="work">
      <section class="col left">
        <div class="dock h464">
          <div class="head"><i></i><b>x</b></div>
          <div class="screen">
            <svg viewBox="5 122 524 440">
              <path :d="gridX.map(x => `M${x} 122v440`).join('') + gridY.map(y => `M5 ${y}h524`).join('')" stroke="#808080" fill="none" />
              <g transform="translate(0 100) scale(0.344388 0.333333)" class="coast">
                <path :d="roughThin" />
                <path :d="arctic" />
                <path :d="asia" />
                <path :d="roughThick" class="thick" />
                <path :d="dots" class="dots" />
                <path d="M178,368V445" />
              </g>
              <g stroke="#00d0d0" fill="none"><circle cx="281.500" cy="260.500" r="4.500" /><path d="M281.500 251v4M281.500 266v4M274 260.500h3M286 260.500h3" /></g>
              <g v-for="p in pins" :key="p.n">
                <ellipse :cx="p.x" :cy="p.y" rx="10.300" ry="6.800" :fill="COL[p.c]" />
                <use v-if="p.n !== 'S126'" href="#flag" :x="Math.round(p.x - 10)" :y="Math.round(p.y - 15)" width="20" height="13" />
                <text :x="p.x" :y="p.y + 4.600" class="pin" :class="'on-' + p.c">{{ p.n }}</text>
              </g>
            </svg>
          </div>
        </div>
        <div class="dock h452">
          <div class="head"><i></i><b>x</b></div>
          <div class="screen">
            <svg viewBox="5 586 524 428">
              <path d="M75.500 592v386M139.500 592v386M203.500 592v386M267.500 592v386M331.500 592v386M395.500 592v386M459.500 592v386M11 688.500h513M11 784.500h513M11 880.500h513" stroke="#585858" stroke-dasharray="3 3" fill="none" />
              <rect x="10.500" y="591.500" width="514" height="387" fill="none" stroke="#c0c0c0" />
              <g transform="translate(0 565) scale(0.344388 0.333333)" class="world">
                <polyline v-for="(s, i) in world" :key="i" :points="s" />
              </g>
              <g stroke="#20d0e0" fill="none"><circle cx="281.500" cy="667.500" r="5" /><path d="M281.500 659v17M274 667.500h15" /><path d="M278 664l7 7M285 664l-7 7" stroke-width=".7" /></g>
              <text x="10.500" y="993.500">Longitude</text><text x="10.500" y="1006.500">Latitude</text>
              <text x="524.500" y="993.500" class="end">10.12171650 °</text><text x="524.500" y="1006.500" class="end">54.32477333 °</text>
            </svg>
          </div>
        </div>
      </section>

      <section class="col middle">
        <div class="dock h378">
          <div class="head"><i></i><b>x</b></div>
          <div class="screen">
            <svg viewBox="543 122 713 354">
              <g stroke="#c8c8c8" fill="none"><circle cx="899.500" cy="299.500" r="159.700" /><circle cx="899.500" cy="299.500" r="79.700" /></g>
              <path d="M894 134h10v10h-10zM732 292h14v14h-14zM1053 292h11v14h-11z" fill="#000" />
              <rect x="899" y="299" width="1" height="1" fill="#fff" />
              <text x="899" y="143" class="c">N</text><text x="739" y="303" class="c">W</text><text x="1058.500" y="303" class="c">E</text>
              <g v-for="s in sky" :key="s.n">
                <path :d="`M${s.x - 22.500} ${s.y - 11.500}v23M${s.x + 22.500} ${s.y - 11.500}v23`" :stroke="BAR[s.c]" stroke-width="3" />
                <path :d="`M${s.x - 22} ${s.y}h44`" :stroke="BAR[s.c]" stroke-width="2" />
                <ellipse :cx="s.x" :cy="s.y" rx="17.500" ry="11.500" :fill="COL[s.c]" />
                <use v-if="s.f" href="#flag" :x="Math.round(s.x - 11.300)" :y="Math.round(s.y - 20.300)" width="20" height="13" />
                <text :x="s.x" :y="s.y + 6" class="sat" :class="'on-' + s.c">{{ s.n }}</text>
              </g>
            </svg>
          </div>
        </div>
        <div class="dock h234">
          <div class="head"><i></i><b>x</b></div>
          <div class="screen">
            <svg viewBox="543 500 713 210">
              <g v-for="l in levels" :key="l.n">
                <rect :x="l.x" :y="l.y" :width="l.w" :height="693.500 - l.y" :fill="COL[l.c]" />
                <text :x="l.x + l.w / 2" :y="l.y + 8.600" class="tag" :class="'in-' + l.c">{{ l.n }}</text>
                <path :d="`M${l.x} ${l.y}h${l.w}` + l.marks.map(m => `M${l.x} ${m}h${l.w}`).join('')" stroke="#c0c0c0" />
                <path :d="`M${l.x} 501.500V693.500`" stroke="#c0c0c0" />
              </g>
              <g v-for="d in dbLines" :key="d[0]">
                <path :d="`M544 ${d[1]}h695`" stroke="#d0d0d0" stroke-dasharray="3 2" />
                <text x="1255" :y="d[1] + 5.200" class="big end axis">{{ d[0] }}</text>
              </g>
              <rect x="544.500" y="501.500" width="695" height="192" fill="none" stroke="#c0c0c0" />
              <g v-for="l in levels" :key="l.n">
                <text :x="l.x + l.w / 2" y="690" class="big c" :class="'in-' + l.c">{{ l.v }}</text>
                <text :x="l.x + l.w / 2" y="706.400" class="big c">{{ l.n }}</text>
              </g>
              <text x="1255.500" y="707" class="big end axis">dB</text>
            </svg>
          </div>
        </div>
        <div class="dock h304">
          <div class="head"><i></i><b>x</b></div>
          <div class="screen">
            <svg viewBox="543 734 713 280">
              <g v-for="r in history" :key="r.a">
                <text x="544.500" :y="r.y + 5" class="tiny">{{ r.a }}</text>
                <text x="544.500" :y="r.y + 13" class="tiny">{{ r.b }}</text>
                <text x="544.500" :y="r.y + 21" class="tiny">{{ r.d }}</text>
                <use v-if="r.flag" href="#flag" x="600" :y="r.y - 1.500" width="20" height="14" />
                <g v-for="(v, i) in r.v" :key="i">
                  <rect v-if="v" :x="622.500 + i * 31" :y="r.y + v" width="31" :height="21 - v" :fill="COL[r.c]" />
                  <path v-if="v" :d="`M${622.500 + i * 31} ${r.y + v}h31`" stroke="#b8c8c0" />
                </g>
                <path :d="rep(0, 19).map((_, i) => `M${653.500 + i * 31} ${r.y}v21`).join('')" stroke="#b8b8b8" />
                <rect x="622.500" :y="r.y" width="620" height="21" fill="none" stroke="#c0c0c0" />
                <text x="1245" :y="r.y + 5" class="tiny">55</text><text x="1245" :y="r.y + 13" class="tiny">dB</text><text x="1245" :y="r.y + 21" class="tiny">5</text>
              </g>
            </svg>
          </div>
        </div>
      </section>

      <section class="col right">
        <div class="dock h233">
          <div class="head"><i></i><b>x</b></div>
          <div class="screen">
            <div class="data">
              <div v-for="t in table" :key="t[0]" class="line">
                <label>{{ t[0] }}</label>
                <div class="field">
                  <template v-if="t[2]"><span>0</span><span class="mark" :style="{ left: t[2] + 'px' }"><i></i>{{ t[3] }}</span></template>
                  <span class="val" :class="{ cyan: t[1] === '2D' }">{{ t[1] }}</span>
                </div>
              </div>
              <div class="line">
                <label>Satellites</label>
                <div class="strip"><i v-for="(c, i) in strip" :key="i" :class="[c, { gap: i === 4 || i === 8 }]"></i></div>
              </div>
            </div>
          </div>
        </div>
        <div class="dock h192">
          <div class="head"><i></i><b>x</b></div>
          <div class="screen">
            <svg viewBox="1268 355 647 168">
              <g transform="translate(1255 335) scale(0.424107 0.333333)" class="rose">
                <path class="f" d="M738,131L752,264L779,268ZM837,179L794,240L779,268L794,314ZM937,241L832,264L828,295ZM900,370L850,313L828,295L794,314ZM850,495L835,362L808,360ZM749,449L794,385L808,360L794,314ZM650,385L755,365L760,332ZM688,257L738,314L760,332L794,314Z" />
                <path d="M738,131L794,240M837,179L832,264M937,241L850,313M900,370L808,360M850,495L794,385M749,449L755,365M650,385L738,314M688,257L752,266" />
              </g>
              <text x="1563.300" y="374" class="c">N</text><text x="1660" y="416" class="c">E</text><text x="1618" y="514" class="c">S</text><text x="1520" y="471.500" class="c">W</text>
              <text x="1270.500" y="519.500">21.99 deg</text>
            </svg>
          </div>
        </div>
        <div class="dock h185">
          <div class="head"><i></i><b>x</b></div>
          <div class="screen">
            <svg viewBox="1268 547 647 161">
              <path :d="speedTicks" stroke="#c0c0c0" />
              <path d="M1584.500 632L1554 666L1591 637" fill="none" stroke="#c0c0c0" stroke-width="2.200" /><path d="M1553.500 666.500l14-14.500" stroke="#c0c0c0" stroke-width="3" />
              <circle cx="1591.500" cy="627.300" r="7.400" fill="#000" stroke="#c0c0c0" stroke-width="3.800" />
              <text x="1543.400" y="680" class="c">0</text><text x="1524.300" y="622" class="c">50</text><text x="1560.500" y="572" class="c">100</text><text x="1622.300" y="572" class="c">150</text><text x="1658.500" y="622" class="c">200</text><text x="1639.700" y="680" class="c">250</text>
              <text x="1591.700" y="704" class="c">0.06 m/s = 0.2 km/h</text>
            </svg>
          </div>
        </div>
        <div class="dock h154">
          <div class="head"><i></i><b>x</b></div>
          <div class="screen">
            <svg viewBox="1268 732 647 130">
              <path :d="altTicks" stroke="#c0c0c0" />
              <path d="M1591.300 792L1605 770.500L1597 793M1586 794.300L1549 795.300L1586 800.300" fill="none" stroke="#c0c0c0" stroke-width="2" /><path d="M1549 795.300h16M1605 770.500l-4 9" stroke="#c0c0c0" stroke-width="3" />
              <circle cx="1591.300" cy="797.300" r="6" fill="#000" stroke="#c0c0c0" stroke-width="2.700" />
              <text v-for="l in altLabels" :key="l[0]" :x="l[1]" :y="l[2] + 0.500" class="c">{{ l[0] }}</text>
              <text x="1270.500" y="858">75.800 m</text><text x="1910" y="858" class="end">x100</text>
            </svg>
          </div>
        </div>
        <div class="dock h152">
          <div class="head"><i></i><b>x</b></div>
          <div class="screen">
            <svg viewBox="1268 886 647 128">
              <path :d="clockTicks" stroke="#c0c0c0" />
              <path d="M1605.300 924.500L1591.500 950.500L1578.700 971.600" fill="none" stroke="#c0c0c0" stroke-width="2" />
              <path d="M1569.300 925L1601.700 961.700" stroke="#a0a0a0" stroke-width="1" />
              <rect x="1589" y="948" width="5" height="5" fill="#c0c0c0" />
              <text x="1270.500" y="899">19:04:53</text><text x="1913.500" y="899" class="end">UTC</text>
              <text x="1270.500" y="1010">Tuesday</text><text x="1913.500" y="1010" class="end">04/07/2020</text>
            </svg>
          </div>
        </div>
      </section>
    </main>

    <footer class="status">
      <span class="ready">Ready</span>
      <div class="cell c1"><svg width="16" height="16" viewBox="0 0 16 16" v-html="icons.plug"></svg>NTRIP client: Not connected</div>
      <div class="cell c2">u-blox 7</div>
      <div class="cell c3"><svg width="14" height="16" viewBox="0 0 16 16" v-html="icons.plug"></svg>Disconnected</div>
      <div class="cell c4">No file open</div>
      <div class="cell c5">NMEA</div>
      <div class="cell c6">00:38:56</div>
      <div class="cell c7">19:04:54</div>
      <div class="cell c8"><svg width="11" height="13" viewBox="0 0 11 13"><circle cx="5.500" cy="6" r="4.500" fill="#808080" /><path d="M3 5l3-2M3 8l5-3M4 11h3" stroke="#b8b8b8" /></svg></div>
    </footer>
  </div>
</template>

<style>
html, body { margin: 0; background: #f0f0f0; overflow: hidden; }
</style>
<style scoped>
.app { width: 1920px; height: 1040px; display: flex; flex-direction: column; background: #f0f0f0; color: #000; font: 12px "Open Sans", "Noto Sans", sans-serif; letter-spacing: -0.4px; overflow: hidden; }
.defs { display: block; position: absolute; }
.title { height: 22px; background: #fff; display: flex; align-items: center; padding-left: 2px; gap: 4px; flex: none; }
.title > svg { flex: none; margin-bottom: 1px; }
.title > span { padding-top: 3px; font-size: 12px; letter-spacing: -0.1px; }
.logo { font: bold 9px "Liberation Sans", sans-serif; fill: #fff; }
.winbtns { margin-left: auto; display: flex; gap: 33px; padding-right: 19px; }
.winbtns svg { width: 12px; height: 12px; fill: none; stroke: #000; stroke-width: 1; margin-top: -2px; }
.menu { height: 21px; background: #fff; display: flex; padding-left: 7px; line-height: 22px; flex: none; }
.menu span { flex: none; }
.toolrow { height: 30px; box-sizing: border-box; border-top: 1px solid #a0a0a0; background: #fff; display: flex; flex: none; }
.toolbar { display: flex; align-items: center; background: #f0f0f0; border-right: 1px solid #a0a0a0; box-shadow: inset 0 1px #fff; padding-right: 3px; }
.toolbar + .toolbar { border-left: 1px solid #fff; }
.grip { width: 2px; height: 18px; margin: 0 3px 0 4px; background: repeating-linear-gradient(#b0b0b0 0 2px, transparent 2px 4px); }
.toolbar + .toolbar .grip { margin: 0 4px 0 5px; }
.sep { width: 1px; height: 18px; background: #a0a0a0; border-right: 1px solid #fff; margin: 0 2px; }
.drop { width: 0; height: 0; border: 4px solid transparent; border-top-color: #000; border-bottom: 0; margin: 0 3.5px; }
.btn { width: 23px; height: 22px; display: flex; align-items: center; justify-content: center; box-sizing: border-box; }
.btn svg { display: block; overflow: visible; }
.btn.pressed { border: 1px solid #fff; border-top-color: #a0a0a0; border-left-color: #a0a0a0; background: #f8f8f8; }
.btn.pressed svg { margin: 1px 0 0 0; }
.btn.held { background: #f8f8f8; }
.slider { width: 299px; height: 16px; display: flex; align-items: center; padding-left: 9px; box-sizing: border-box; }
.slider i { width: 4px; height: 13px; border-right: 1px solid #696969; border-bottom: 1px solid #696969; border-left: 1px solid #fff; background: #f0f0f0; }
.slider b { width: 277px; height: 1px; background: #696969; border-top: 1px solid #a0a0a0; margin-top: -3px; }

.work { height: 916px; flex: none; display: grid; grid-template-columns: 536px 725px 659px; }
.col { display: flex; flex-direction: column; box-sizing: border-box; }
.left { border-right: 1px solid #696969; }
.right { border-left: 1px solid #a0a0a0; }
.dock { box-sizing: border-box; border-top: 1px solid #a0a0a0; display: flex; flex-direction: column; padding: 0 3px 3px 5px; box-shadow: inset 0 1px #fff; flex: none; }
.left .dock { padding: 0 4px 3px 3px; }
.right .dock { padding-left: 4px; box-shadow: inset 1px 1px #fff; }
.h464 { height: 464px; } .h452 { height: 452px; } .h378 { height: 378px; } .h234 { height: 234px; } .h304 { height: 304px; }
.h233 { height: 233px; } .h192 { height: 192px; } .h185 { height: 185px; } .h154 { height: 154px; } .h152 { height: 152px; }
.head { height: 16px; flex: none; display: flex; padding-left: 1px; }
.head i { flex: 1; height: 6px; margin-top: 5px; box-sizing: border-box; border-right: 1px solid #a0a0a0; background: linear-gradient(#fff 0 1px, #f0f0f0 1px 2px, #a0a0a0 2px 3px, #fff 3px 4px, #f0f0f0 4px 5px, #a0a0a0 5px 6px); }
.head b { width: 14px; box-sizing: border-box; padding-left: 2px; text-align: center; font: bold 11px/15px "Liberation Sans", sans-serif; letter-spacing: 0; }
.screen { flex: 1; min-height: 0; background: #000; border: 2px solid #fff; border-top-color: #777; border-left-color: #888; }
.screen > svg { display: block; width: 100%; height: 100%; shape-rendering: crispEdges; }
.screen text { font: 11px "Liberation Sans", Arial, sans-serif; fill: #c0c0c0; letter-spacing: 0; transform: translateY(-1px); }
.screen .end { text-anchor: end; }
.screen .c { text-anchor: middle; }
.coast path { fill: none; stroke: #fff; stroke-width: 1.3; vector-effect: non-scaling-stroke; }
.coast .thick { stroke-width: 2.2; }
.coast .dots { stroke-width: 1; stroke: #ddd; }
.world polyline { fill: none; stroke: #c8c8c8; stroke-width: 1; vector-effect: non-scaling-stroke; }
.screen .pin { font-size: 11px; text-anchor: middle; transform: none; }
.screen .sat { font-size: 18px; text-anchor: middle; transform: none; }
.screen .on-g { fill: #b4f5b4; }
.screen .on-b { fill: #b8b8f5; }
.screen .on-r { fill: #f5c0c0; }
.screen .tag { font-size: 8px; text-anchor: middle; }
.screen .big { font-size: 13.5px; font-weight: bold; fill: #c8c8c8; }
.screen .axis { font-size: 14px; font-weight: normal; }
.screen .in-g { fill: #003000; }
.screen .in-b { fill: #d0d0ff; }
.screen .tiny { font-size: 7px; }
.rose path { fill: none; stroke: #c0c0c0; stroke-width: 1; vector-effect: non-scaling-stroke; }
.rose .f { fill: #c0c0c0; stroke: none; }

.data { padding: 5px 5px 0; font: 11px "Liberation Sans", Arial, sans-serif; letter-spacing: -0.1px; color: #c0c0c0; display: flex; flex-direction: column; gap: 1px; }
.line { display: flex; height: 12px; line-height: 14px; }
.line label { width: 61px; flex: none; white-space: nowrap; letter-spacing: -0.45px; }
.field { flex: 1; background: #404040; display: flex; position: relative; height: 12px; line-height: 13px; }
.val { margin-left: auto; }
.cyan { color: #30d8d0; }
.mark { position: absolute; top: 0; display: flex; gap: 1px; }
.mark i { width: 3px; height: 11px; background: #10b010; }
.strip { display: flex; gap: 1px; height: 11px; margin-top: 1px; }
.strip i { width: 46.2px; height: 11px; }
.strip .g { background: #00c000; }
.strip .b { background: #0000c0; }
.strip .gap { margin-left: 1px; }

.status { flex: 1; min-height: 0; display: flex; border-top: 1px solid #a0a0a0; padding-top: 3px; line-height: 15px; white-space: nowrap; }
.ready { width: 1148px; padding-left: 2px; flex: none; }
.cell { border-left: 1px solid #a0a0a0; border-top: 1px solid #a0a0a0; box-sizing: border-box; flex: none; padding-left: 2px; display: flex; gap: 3px; overflow: hidden; letter-spacing: -0.3px; }
.cell > svg { margin-top: -1px; }
.c1 { width: 225px; margin-right: 27px; } .c2 { width: 115px; margin-right: 3px; } .c3 { width: 105px; margin-right: 3px; }
.c4 { width: 125px; margin-right: 3px; } .c5 { width: 45px; margin-right: 3px; padding-left: 1px; } .c6 { width: 46px; margin-right: 2px; padding-left: 1px; letter-spacing: -0.6px; }
.c7 { width: 46px; margin-right: 2px; padding-left: 1px; letter-spacing: -0.6px; } .c8 { width: 18px; padding: 2px 0 0 3px; }
</style>
